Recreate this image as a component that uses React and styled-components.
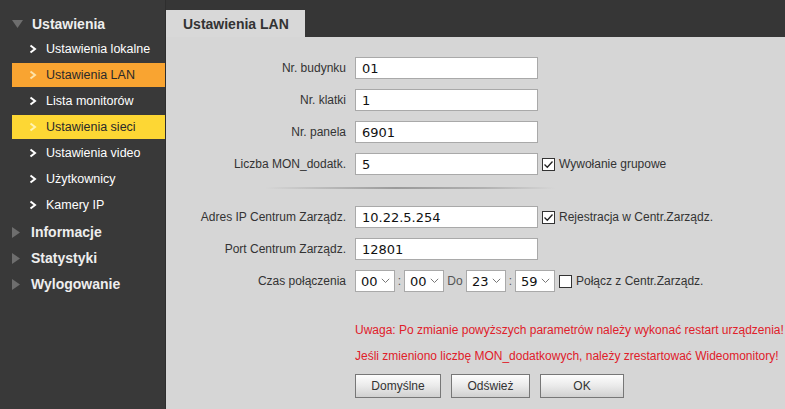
import React from 'react';
import styled, { createGlobalStyle } from 'styled-components';

const Global = createGlobalStyle`
    html, body {
        margin: 0;
        padding: 0;
        background: #363636;
    }
    * { box-sizing: border-box; }
`;

const Page = styled.div`
    display: flex;
    width: 785px;
    height: 409px;
    overflow: hidden;
    background: #363636;
    font-family: "Liberation Sans", Arial, sans-serif;
`;

const Sidebar = styled.nav`
    width: 166px;
    flex-shrink: 0;
    padding-top: 11px;
    background: #393939;
    border-right: 1px solid #2e2e2e;
`;

const Section = styled.div`
    display: flex;
    align-items: center;
    height: 26px;
    padding-left: 12px;
    color: #eeeeee;
    font-weight: bold;
    font-size: 14px;
    gap: ${p => (p.open ? '9px' : '11px')};
`;

const Item = styled.div`
    display: flex;
    align-items: center;
    height: 24px;
    margin: 0 0 2px 12px;
    padding-left: 17px;
    gap: 9px;
    font-size: 12.5px;
    color: ${p => (p.bg ? '#2a2a2a' : '#ffffff')};
    background: ${p => p.bg || 'transparent'};
`;

const Chevron = ({ color }) => (
    <svg width="8" height="10" viewBox="0 0 8 10">
        <path d="M1.5 1.5 L6 5 L1.5 8.5" fill="none" stroke={color} strokeWidth="2" />
    </svg>
);

const Tri = ({ open }) =>
    open ? (
        <svg width="11" height="8" viewBox="0 0 11 8">
            <path d="M0 0 L11 0 L5.5 8 Z" fill="#6e6e6e" />
        </svg>
    ) : (
        <svg width="8" height="11" viewBox="0 0 8 11">
            <path d="M0 0 L8 5.5 L0 11 Z" fill="#6e6e6e" />
        </svg>
    );

const Main = styled.main`
    flex: 1;
    display: flex;
    flex-direction: column;
`;

const TabBar = styled.div`
    height: 37px;
    padding-top: 10px;
    display: flex;
    background: #363636;
`;

const Tab = styled.div`
    width: 139px;
    background: #d8d8d8;
    color: #333;
    font-weight: bold;
    font-size: 14px;
    padding: 6px 0 0 17px;
`;

const Panel = styled.div`
    flex: 1;
    background: #d6d6d6;
    padding-top: 20px;
`;

const Row = styled.div`
    display: flex;
    align-items: center;
    height: 22px;
    margin-bottom: 10px;
`;

const Label = styled.div`
    width: 180px;
    margin-right: 9px;
    text-align: right;
    font-size: 12px;
    color: #333;
    white-space: nowrap;
`;

const Input = styled.div`
    width: 183px;
    height: 22px;
    background: #fff;
    border: 1px solid #a9a9a9;
    padding: 3px 0 0 6px;
    font-family: "DejaVu Sans", Verdana, sans-serif;
    font-size: 13px;
    color: #111;
`;

const Check = styled.div`
    display: flex;
    align-items: center;
    gap: 4px;
    margin-left: 4px;
    font-size: 12px;
    color: #333;
`;

const Box = styled.span`
    width: 13px;
    height: 13px;
    background: #fff;
    border: 1px solid #333;
    display: flex;
    align-items: center;
    justify-content: center;
`;

const Tick = () => (
    <svg width="11" height="11" viewBox="0 0 11 11">
        <path d="M1.5 5.5 L4.3 8.3 L9.5 2.5" fill="none" stroke="#222" strokeWidth="1.3" />
    </svg>
);

const Separator = styled.div`
    width: 290px;
    height: 2px;
    margin: 12px 0 17px 99px;
    background: linear-gradient(to right, rgba(150,150,150,0) 0%, #9a9a9a 45%, #b0b0b0 75%, rgba(170,170,170,0) 100%);
`;

const Select = styled.div`
    display: flex;
    align-items: center;
    justify-content: space-between;
    width: 40px;
    height: 22px;
    background: #fff;
    border: 1px solid #a9a9a9;
    padding: 0 4px 0 5px;
    font-family: "DejaVu Sans", Verdana, sans-serif;
    font-size: 13px;
    color: #111;
`;

const Sep = styled.span`
    width: ${p => p.w}px;
    text-align: center;
    font-size: 12px;
    color: #555;
`;

const Down = () => (
    <svg width="9" height="6" viewBox="0 0 9 6">
        <path d="M0.8 0.8 L4.5 4.5 L8.2 0.8" fill="none" stroke="#777" strokeWidth="1" />
    </svg>
);

const Warning = styled.div`
    margin-left: 189px;
    margin-top: ${p => p.top || 0}px;
    height: 26px;
    line-height: 26px;
    color: #e0202a;
    font-size: 12px;
    white-space: nowrap;
    overflow: hidden;
`;

const Buttons = styled.div`
    display: flex;
    gap: 10px;
    margin: 5px 0 0 189px;
`;

const Button = styled.button`
    width: ${p => p.w}px;
    height: 24px;
    border: 1px solid #777;
    border-radius: 0;
    background: linear-gradient(to bottom, #fdfdfd 0%, #ececec 45%, #d0d0d0 100%);
    font-family: "Liberation Sans", Arial, sans-serif;
    font-size: 12px;
    color: #333;
    padding: 0;
`;

const SelectBox = ({ value }) => (
    <Select>
        {value}
        <Down />
    </Select>
);

const subItems = [
    { name: 'Ustawienia lokalne' },
    { name: 'Ustawienia LAN', bg: '#f9a431', chev: '#fde3a8' },
    { name: 'Lista monitorów' },
    { name: 'Ustawienia sieci', bg: '#fdd734', chev: '#fff3b0' },
    { name: 'Ustawienia video' },
    { name: 'Użytkownicy' },
    { name: 'Kamery IP' },
];

export default function App() {
    return (
        <Page>
            <Global />
            <Sidebar>
                <Section open>
                    <Tri open />
                    Ustawienia
                </Section>
                {subItems.map(it => (
                    <Item key={it.name} bg={it.bg}>
                        <Chevron color={it.chev || '#ffffff'} />
                        {it.name}
                    </Item>
                ))}
                <Section>
                    <Tri />
                    Informacje
                </Section>
                <Section>
                    <Tri />
                    Statystyki
                </Section>
                <Section>
                    <Tri />
                    Wylogowanie
                </Section>
            </Sidebar>
            <Main>
                <TabBar>
                    <Tab>Ustawienia LAN</Tab>
                </TabBar>
                <Panel>
                    <Row>
                        <Label>Nr. budynku</Label>
                        <Input>01</Input>
                    </Row>
                    <Row>
                        <Label>Nr. klatki</Label>
                        <Input>1</Input>
                    </Row>
                    <Row>
                        <Label>Nr. panela</Label>
                        <Input>6901</Input>
                    </Row>
                    <Row>
                        <Label>Liczba MON_dodatk.</Label>
                        <Input>5</Input>
                        <Check>
                            <Box><Tick /></Box>
                            Wywołanie grupowe
                        </Check>
                    </Row>
                    <Separator />
                    <Row>
                        <Label>Adres IP Centrum Zarządz.</Label>
                        <Input>10.22.5.254</Input>
                        <Check>
                            <Box><Tick /></Box>
                            Rejestracja w Centr.Zarządz.
                        </Check>
                    </Row>
                    <Row>
                        <Label>Port Centrum Zarządz.</Label>
                        <Input>12801</Input>
                    </Row>
                    <Row>
                        <Label>Czas połączenia</Label>
                        <SelectBox value="00" />
                        <Sep w={9}>:</Sep>
                        <SelectBox value="00" />
                        <Sep w={22}>Do</Sep>
                        <SelectBox value="23" />
                        <Sep w={9}>:</Sep>
                        <SelectBox value="59" />
                        <Check>
                            <Box />
                            Połącz z Centr.Zarządz.
                        </Check>
                    </Row>
                    <Warning top={25}>Uwaga: Po zmianie powyższych parametrów należy wykonać restart urządzenia!</Warning>
                    <Warning>Jeśli zmieniono liczbę MON_dodatkowych, należy zrestartować Wideomonitory!</Warning>
                    <Buttons>
                        <Button w={86}>Domyślne</Button>
                        <Button w={79}>Odśwież</Button>
                        <Button w={84}>OK</Button>
                    </Buttons>
                </Panel>
            </Main>
        </Page>
    );
}
